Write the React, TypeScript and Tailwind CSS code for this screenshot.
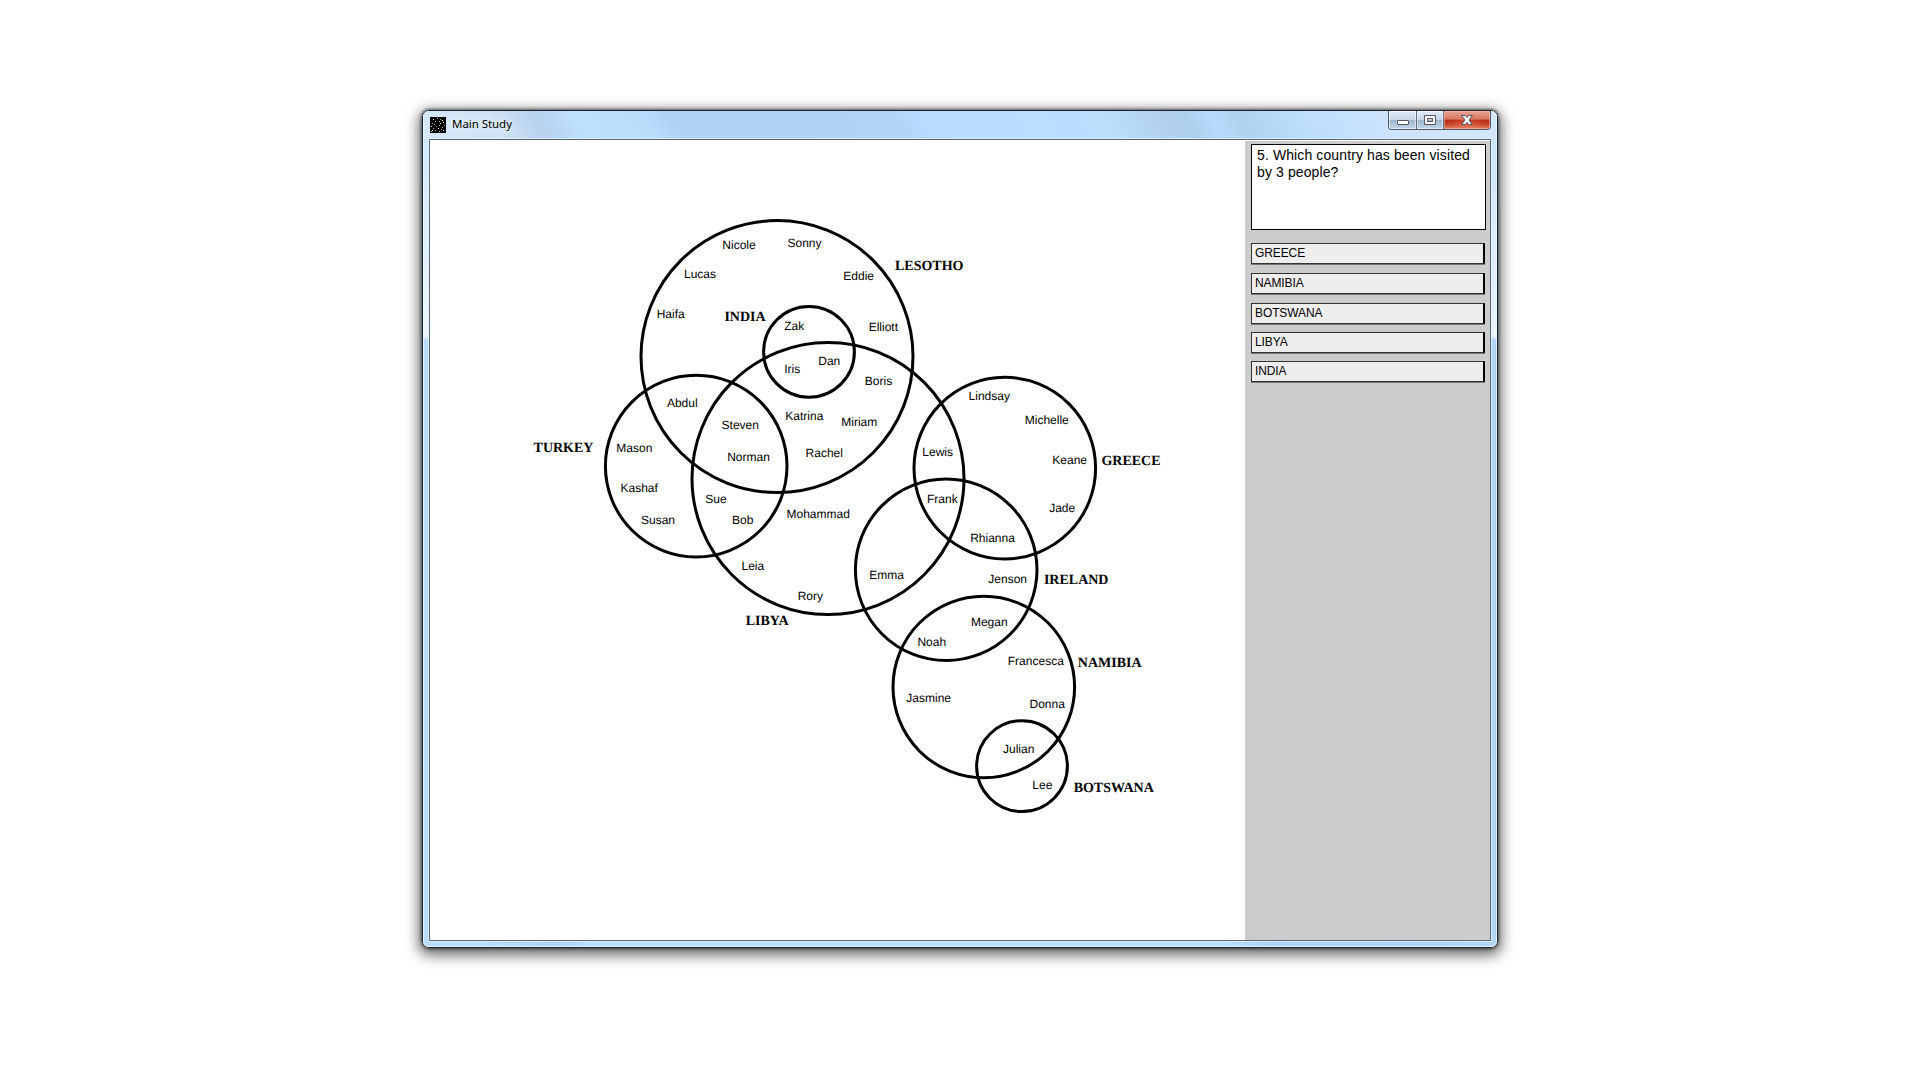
type Label = { text: string; x: number; y: number };

const circles = [
  { name: 'Lesotho', cx: 777.0, cy: 356.6, r: 136 },
  { name: 'Libya', cx: 828.0, cy: 478.6, r: 136 },
  { name: 'India', cx: 809.0, cy: 351.8, r: 45.4 },
  { name: 'Turkey', cx: 696.2, cy: 466.1, r: 90.8 },
  { name: 'Greece', cx: 1004.8, cy: 468.1, r: 90.8 },
  { name: 'Ireland', cx: 946.2, cy: 569.8, r: 90.8 },
  { name: 'Namibia', cx: 983.8, cy: 687.0, r: 90.8 },
  { name: 'Botswana', cx: 1022.0, cy: 766.1, r: 45.4 },
];

const countries: Label[] = [
  { text: 'LESOTHO', x: 929.2, y: 269.7 },
  { text: 'INDIA', x: 745, y: 321.3 },
  { text: 'TURKEY', x: 563.5, y: 451.5 },
  { text: 'LIBYA', x: 767.2, y: 625 },
  { text: 'GREECE', x: 1131, y: 465 },
  { text: 'IRELAND', x: 1076.2, y: 584 },
  { text: 'NAMIBIA', x: 1109.7, y: 667 },
  { text: 'BOTSWANA', x: 1113.7, y: 792 },
];

const people: Label[] = [
  { text: 'Nicole', x: 739, y: 248.5 },
  { text: 'Sonny', x: 804.5, y: 246.5 },
  { text: 'Lucas', x: 700, y: 277.5 },
  { text: 'Eddie', x: 858.7, y: 279.6 },
  { text: 'Haifa', x: 670.7, y: 318 },
  { text: 'Zak', x: 794.3, y: 329.6 },
  { text: 'Elliott', x: 883.3, y: 331 },
  { text: 'Dan', x: 829.3, y: 365.3 },
  { text: 'Iris', x: 792.2, y: 373 },
  { text: 'Boris', x: 878.5, y: 385.2 },
  { text: 'Abdul', x: 682.3, y: 407 },
  { text: 'Steven', x: 740.3, y: 428.7 },
  { text: 'Katrina', x: 804.3, y: 419.7 },
  { text: 'Miriam', x: 859.3, y: 426 },
  { text: 'Mason', x: 634.3, y: 451.5 },
  { text: 'Norman', x: 748.5, y: 460.7 },
  { text: 'Rachel', x: 824.3, y: 457 },
  { text: 'Kashaf', x: 639.2, y: 491.7 },
  { text: 'Sue', x: 716, y: 503.3 },
  { text: 'Bob', x: 742.8, y: 523.6 },
  { text: 'Susan', x: 658, y: 523.7 },
  { text: 'Mohammad', x: 818.2, y: 518.3 },
  { text: 'Leia', x: 752.8, y: 569.7 },
  { text: 'Emma', x: 886.7, y: 578.7 },
  { text: 'Rory', x: 810.3, y: 600 },
  { text: 'Lindsay', x: 989.3, y: 400 },
  { text: 'Michelle', x: 1046.8, y: 423.7 },
  { text: 'Lewis', x: 937.7, y: 455.7 },
  { text: 'Keane', x: 1069.7, y: 464.3 },
  { text: 'Frank', x: 942.3, y: 503.3 },
  { text: 'Jade', x: 1062.2, y: 511.7 },
  { text: 'Rhianna', x: 992.5, y: 541.7 },
  { text: 'Jenson', x: 1007.7, y: 582.7 },
  { text: 'Megan', x: 989.3, y: 625.7 },
  { text: 'Noah', x: 931.8, y: 645.7 },
  { text: 'Francesca', x: 1035.8, y: 665 },
  { text: 'Jasmine', x: 928.7, y: 702 },
  { text: 'Donna', x: 1047.2, y: 708.3 },
  { text: 'Julian', x: 1018.7, y: 753.3 },
  { text: 'Lee', x: 1042.3, y: 789 },
];

function AppIcon() {
  const dots = [
    [3, 2], [7, 1], [10, 2], [12, 3], [5, 4], [9, 4], [13, 5], [2, 6], [4, 7], [10, 6], [9, 8], [14, 8],
    [1, 9], [6, 9], [3, 11], [8, 11], [12, 10], [11, 12], [2, 13], [5, 13], [9, 14], [13, 13], [1, 14],
  ];
  return (
    <svg width="16" height="16" viewBox="0 0 16 16" shapeRendering="crispEdges">
      <rect width="16" height="16" fill="#000" />
      {dots.map(([x, y], i) => (
        <rect key={i} x={x} y={y} width="1" height="1" fill={i % 3 === 0 ? '#fff' : '#bbb'} />
      ))}
    </svg>
  );
}

function CaptionButtons() {
  return (
    <div className="flex h-[19px] w-[103px] overflow-hidden rounded-b-[4px] border border-t-0 border-[#4b5a6c]">
      <div className="flex w-[28px] items-center justify-center border-r border-[#5d6d80] bg-[linear-gradient(#e3ecf6_0,#c6d5e6_48%,#9fb5cd_50%,#c3d6ea_100%)] shadow-[inset_0_0_0_1px_rgba(255,255,255,0.55)]">
        <svg width="12" height="14" viewBox="0 0 12 14">
          <rect x="0.5" y="7.5" width="11" height="4" rx="0.5" fill="#fff" stroke="#535666" />
        </svg>
      </div>
      <div className="flex w-[27px] items-center justify-center border-r border-[#5d6d80] bg-[linear-gradient(#e3ecf6_0,#c6d5e6_48%,#9fb5cd_50%,#c3d6ea_100%)] shadow-[inset_0_0_0_1px_rgba(255,255,255,0.55)]">
        <svg width="12" height="10" viewBox="0 0 12 10">
          <path d="M0.5 0.5h11v9h-11zM3.5 3.5v3h5v-3z" fill="#fff" fillRule="evenodd" stroke="#535666" />
        </svg>
      </div>
      <div className="flex flex-1 items-center justify-center bg-[radial-gradient(ellipse_at_50%_110%,rgba(240,130,90,0.6),transparent_60%),linear-gradient(#e8a597_0,#d5735d_46%,#b82c14_50%,#c9452a_75%,#dd8066_100%)] shadow-[inset_0_0_0_1px_rgba(255,200,190,0.5)]">
        <svg width="12" height="10" viewBox="0 0 12 10">
          <path
            d="M0.6 0.5h3.6L6 2.6 7.8 0.5h3.6L8 5l3.4 4.5H7.8L6 7.4 4.2 9.5H0.6L4 5z"
            fill="#fff"
            stroke="#535666"
          />
        </svg>
      </div>
    </div>
  );
}

function TitleBar() {
  return (
    <header className="flex h-[28px] justify-between rounded-t-[5px] bg-[linear-gradient(60deg,#d6e8fb_0,#cfe2f6_70px,#b8d3ee_108px,#b9d8f6_122px,#bfdfff_138px,#bcdcfc_200px,#afd2f5_225px,#b2d5f7_418px,#b9dbff_442px,#bcdefd_600px,#b0d0ed_652px,#aecfee_672px,#b9dbfb_692px,#b1d1f0_715px,#bbdcfb_760px,#c0e0fd_790px,#cfe4fb_850px,#d3e7fc_940px)] pl-[6px] pr-[5px]">
      <div className="flex items-start gap-[6px] pt-[6px]">
        <AppIcon />
        <span className="-mt-px font-['Noto_Sans','Open_Sans',sans-serif] text-[11.5px] leading-4 tracking-[-0.05px] text-black [text-shadow:0_0_8px_#fff,0_0_10px_#fff]">
          Main Study
        </span>
      </div>
      <CaptionButtons />
    </header>
  );
}

function Diagram() {
  return (
    <svg
      className="block h-[800px] w-[815px] shrink-0 bg-white"
      viewBox="430 140 815 800"
      textRendering="geometricPrecision"
    >
      <g fill="none" stroke="#000" strokeWidth="3">
        {circles.map((c) => (
          <circle key={c.name} cx={c.cx} cy={c.cy} r={c.r} />
        ))}
      </g>
      <g className="font-['Liberation_Sans',Arial,sans-serif] text-[12px]" textAnchor="middle" fill="#000">
        {people.map((p) => (
          <text key={p.text} x={p.x} y={p.y}>
            {p.text}
          </text>
        ))}
      </g>
      <g className="font-['Liberation_Serif',serif] text-[14px] font-bold" textAnchor="middle" fill="#000">
        {countries.map((c) => (
          <text key={c.text} x={c.x} y={c.y}>
            {c.text}
          </text>
        ))}
      </g>
    </svg>
  );
}

function Answer({ label }: { label: string }) {
  return (
    <button className="block h-[21px] w-[234px] border border-r-2 border-[#333] border-r-black bg-[#eee] pl-[3px] text-left text-[12px] leading-[17px] tracking-[-0.1px] text-black shadow-[0_1px_0_#777]">
      {label}
    </button>
  );
}

function Sidebar() {
  return (
    <aside className="mt-px flex-1 bg-[#ccc] pl-[6px] pt-[3px] font-['Liberation_Sans',Arial,sans-serif]">
      <div className="h-[86px] w-[235px] border border-black bg-white pl-[5px] pt-[2px] text-[14px] leading-[17px] tracking-[0.11px] text-black">
        5. Which country has been visited
        <br />
        by 3 people?
      </div>
      <div className="mt-[13px] flex flex-col gap-[9px]">
        <Answer label="GREECE" />
        <Answer label="NAMIBIA" />
        <Answer label="BOTSWANA" />
      </div>
      <div className="mt-[8px] flex flex-col gap-[8px]">
        <Answer label="LIBYA" />
        <Answer label="INDIA" />
      </div>
    </aside>
  );
}

export default function App() {
  return (
    <main className="flex h-[1080px] w-full items-start justify-center overflow-hidden bg-white pt-[110px]">
      <div className="h-[838px] w-[1076px] rounded-[7px] border border-[#1c252e] bg-[linear-gradient(rgba(255,255,255,0.35)_27px,rgba(255,255,255,0.75)_225px,transparent_229px),linear-gradient(90deg,#b9dcfd_0,#b9dcfd_70px,#afd1f2_130px,#bcdefd_170px,#bcdefd_800px,#b0d2f2_850px,#b2d5f7_1074px)] shadow-[0_0_3px_1px_rgba(0,0,0,0.5),0_4px_14px_3px_rgba(0,0,0,0.6)]">
        <div className="h-full rounded-[6px] border border-[#e9f5ff]/90 border-t-white">
          <div className="-mt-px">
            <TitleBar />
          </div>
          <div className="ml-[5px] flex h-[802px] w-[1062px] border border-[#56677a] bg-white shadow-[0_0_0_1px_rgba(230,243,255,0.8)]">
            <Diagram />
            <Sidebar />
          </div>
        </div>
      </div>
    </main>
  );
}
